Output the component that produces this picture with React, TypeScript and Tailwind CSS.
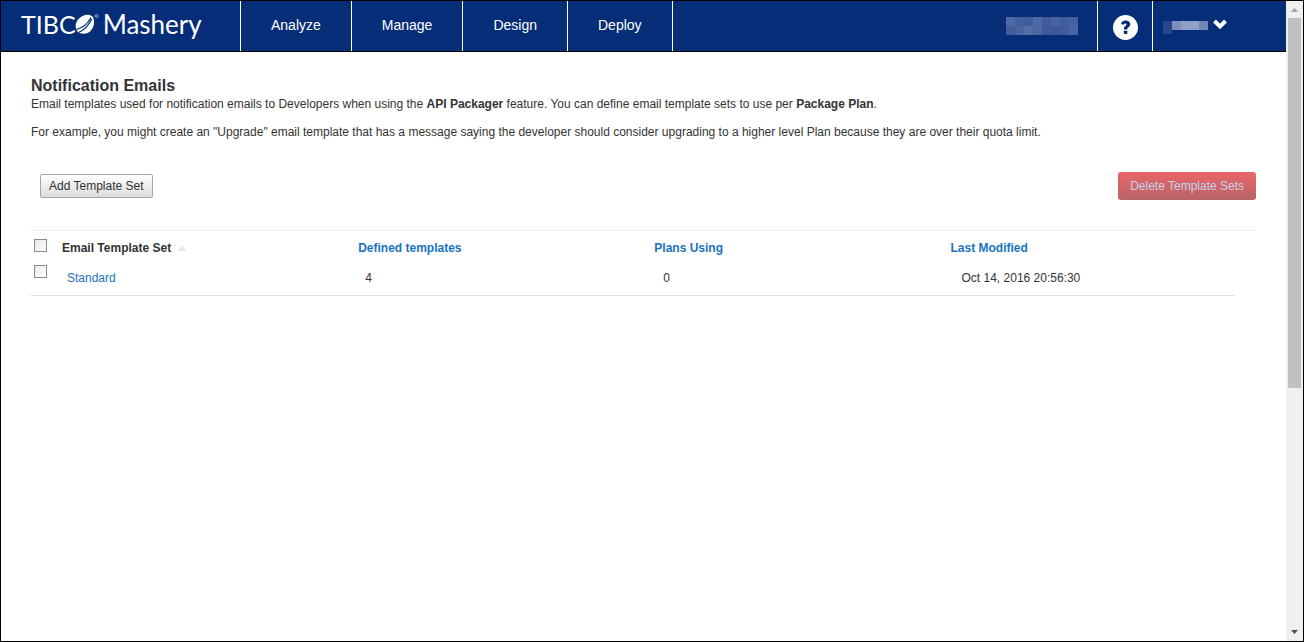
import React from "react";

const navItems = ["Analyze", "Manage", "Design", "Deploy"];

const blurredName = [
  ["bg-[#4f69a3]", "bg-[#40609f]", "bg-[#3f5c9c]", "bg-[#4f69a3]", "bg-[#3f5b9b]", "bg-[#47629f]", "bg-[#405c9c]", "bg-[#46619f]"],
  ["bg-[#3f5c9b]", "bg-[#4b65a1]", "bg-[#536da6]", "bg-[#4c66a2]", "bg-[#3d5998]", "bg-[#3b5797]", "bg-[#3f5b9a]", "bg-[#4a65a1]"],
];

function Logo() {
  return (
    <a href="#home" aria-label="TIBCO Mashery" className="flex w-[239px] shrink-0 items-center pb-1 pl-5 font-[Lato,sans-serif] text-white">
      <span className="text-[25px] leading-[46px]">TIBC</span>
      <svg viewBox="0 0 24 22" className="-ml-px h-[22px] w-6 shrink-0" aria-hidden="true">
        <path d="M4 5.500C8 1.500 14 .5 17.500 3.500C20.500 8 19 15 15 18.500C11 21.500 5 21.500 2 18C-.5 13.500 .5 9 4 5.500Z" fill="#fff" />
        <path d="M1.500 16.500C7.500 15 12.500 11 16 4.500M3.500 19.500C9.500 17 13.500 12.500 16.800 6" fill="none" stroke="#052d78" strokeWidth="1.200" />
        <circle cx="21.500" cy="3" r="1.500" fill="#4a65a1" stroke="#8fa2c8" strokeWidth=".8" />
      </svg>
      <span className="pl-1 text-[26px] leading-[46px]">Mashery</span>
    </a>
  );
}

function Header() {
  return (
    <header className="flex h-[51px] border-b border-black bg-[#052d78] text-sm text-white">
      <Logo />
      <nav className="flex border-l border-white">
        {navItems.map((item) => (
          <a key={item} href={`#${item.toLowerCase()}`} className="border-r border-white px-[30px] leading-[49px]">
            {item}
          </a>
        ))}
      </nav>
      <div className="ml-auto flex">
        <div className="flex flex-col justify-center pr-[19px]" aria-hidden="true">
          {blurredName.map((row, i) => (
            <div key={i} className="flex">
              {row.map((c, j) => (
                <span key={j} className={`h-[9px] w-[9px] ${c}`} />
              ))}
            </div>
          ))}
        </div>
        <button type="button" aria-label="Help" className="flex w-14 items-center justify-center border-x border-white">
          <svg viewBox="0 0 512 512" className="mt-[2px] size-[25px]" aria-hidden="true">
            <circle cx="256" cy="256" r="256" fill="#fff" />
            <path d="M164 184C172 138 206 112 260 112c56 0 94 28 94 76 0 60-60 62-60 98v10h-72v-14c0-54 52-58 52-88 0-13-9-20-23-20-16 0-24 9-28 26z" fill="#052d78" />
            <rect x="222" y="322" width="72" height="66" rx="12" fill="#052d78" />
          </svg>
        </button>
        <button type="button" aria-label="Account menu" className="flex w-[133px] items-center pl-[10px]">
          <span className="flex items-start pt-[3px]">
            <span className="h-[13px] w-[9px] bg-[#26488b]" />
            <span className="h-[9px] w-[9px] bg-[#7d90bc]" />
            <span className="h-[9px] w-[18px] bg-[#8f9fc6]" />
            <span className="h-[9px] w-[9px] bg-[#7387b7]" />
          </span>
          <svg viewBox="0 0 14 10" className="mb-1 ml-[5px] h-[10px] w-[14px]" aria-hidden="true">
            <path d="M1.500 2L7 7.500L12.500 2" fill="none" stroke="#fff" strokeWidth="3.900" />
          </svg>
        </button>
      </div>
    </header>
  );
}

function Check({ label }: { label: string }) {
  return (
    <input
      type="checkbox"
      aria-label={label}
      className="block size-[13px] appearance-none border border-[#8c8c8c] bg-linear-to-br from-[#e8e8e8] to-white checked:bg-[#1a73c0]"
    />
  );
}

function TemplateTable() {
  return (
    <div className="mt-[30px] border-t border-[#f0f0f0] pr-[21px]">
      <table className="w-full table-fixed border-collapse text-left">
        <colgroup>
          <col className="w-[31px]" />
          <col className="w-[24.6%]" />
          <col className="w-[24.6%]" />
          <col className="w-[24.6%]" />
          <col />
        </colgroup>
        <thead>
          <tr className="h-[34px] text-[#1a73c0]">
            <th className="pb-[5px] pl-[3px]"><Check label="Select all template sets" /></th>
            <th className="text-[#333333]">
              <span className="flex items-center gap-[6px]">
                Email Template Set
                <svg viewBox="0 0 10 5" className="h-[5px] w-[10px]" aria-hidden="true"><path d="M0 5L5 0L10 5Z" fill="#e8e6e2" /></svg>
              </span>
            </th>
            <th>Defined templates</th>
            <th>Plans Using</th>
            <th>Last Modified</th>
          </tr>
        </thead>
        <tbody>
          <tr className="h-[30px] border-b border-[#dddddd]">
            <td className="pb-4 pl-[3px]"><Check label="Select Standard" /></td>
            <td className="pb-[3px] pl-[5px]"><a href="#standard" className="text-[#1a73c0]">Standard</a></td>
            <td className="pb-[3px] pl-[7px]">4</td>
            <td className="pb-[3px] pl-[9px]">0</td>
            <td className="pb-[3px] pl-[11px]">Oct 14, 2016 20:56:30</td>
          </tr>
        </tbody>
      </table>
    </div>
  );
}

function ScrollRail() {
  return (
    <div className="flex w-[17px] shrink-0 flex-col bg-[#f0f0f0]" aria-hidden="true">
      <svg viewBox="0 0 17 17" className="size-[17px] shrink-0"><path d="M5 11L8.500 7L12 11Z" fill="#a3a3a3" /></svg>
      <div className="flex-1 px-[2px]">
        <div className="h-[61%] bg-[#c1c1c1]" />
      </div>
      <svg viewBox="0 0 17 17" className="size-[17px] shrink-0"><path d="M5 6L8.500 10L12 6Z" fill="#505050" /></svg>
    </div>
  );
}

export default function App() {
  return (
    <div className="flex min-h-screen border border-black bg-white font-['Liberation_Sans',Arial,sans-serif] text-xs text-[#333333]">
      <div className="min-w-0 flex-1">
        <Header />
        <main className="px-[30px] pt-6">
          <h1 className="text-base leading-5 font-bold">Notification Emails</h1>
          <p className="leading-4">
            Email templates used for notification emails to Developers when using the <b>API Packager</b> feature. You can
            define email template sets to use per <b>Package Plan</b>.
          </p>
          <p className="mt-3 leading-4">
            For example, you might create an "Upgrade" email template that has a message saying the developer should
            consider upgrading to a higher level Plan because they are over their quota limit.
          </p>
          <div className="mt-8 flex items-center justify-between pl-[9px]">
            <button type="button" className="h-6 rounded-[2px] border border-[#a6a6a6] bg-linear-to-b from-white to-[#dcdcdc] px-2">
              Add Template Set
            </button>
            <button type="button" className="h-7 rounded-[3px] bg-linear-to-b from-[#ea6567] to-[#b86467] px-3 text-[#c5d3ea]">
              Delete Template Sets
            </button>
          </div>
          <TemplateTable />
        </main>
      </div>
      <ScrollRail />
    </div>
  );
}
